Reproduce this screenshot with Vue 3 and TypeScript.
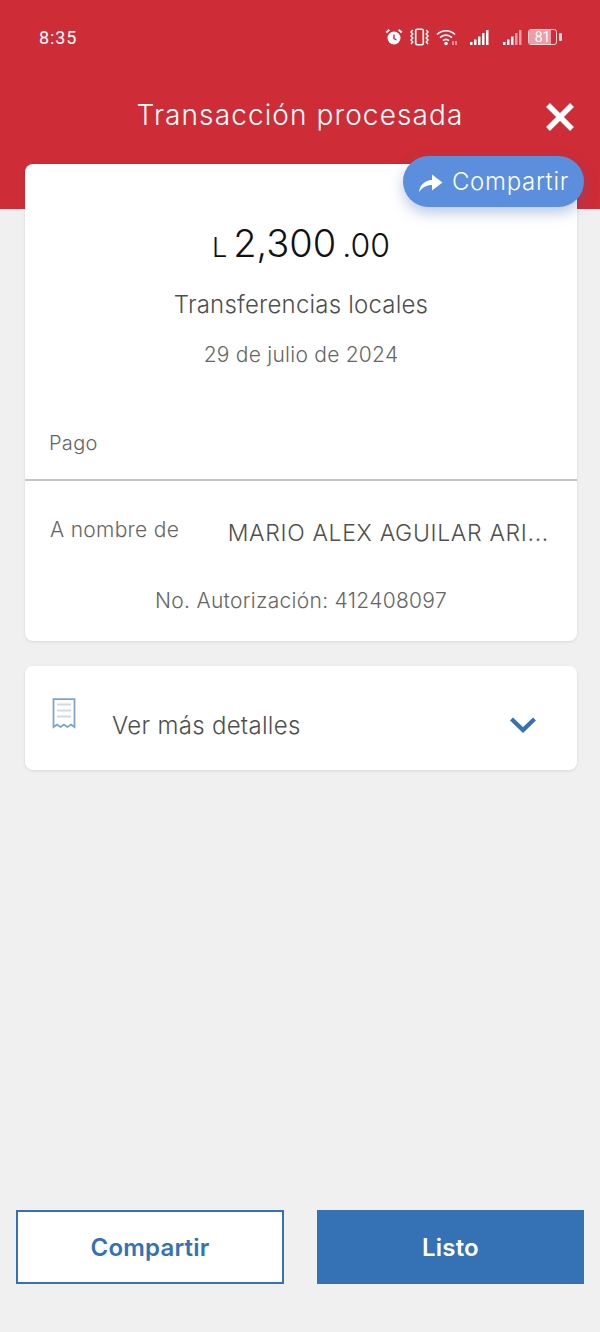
<template>
  <div class="screen">
    <header class="top">
      <div class="status">
        <span class="time">8:35</span>
        <div class="status-icons">
          <!-- alarm -->
          <svg width="18" height="18" viewBox="0 0 18 18">
            <circle cx="9" cy="10" r="6.500" fill="#fff" />
            <path d="M9 6.500V10.500L11.500 12" fill="none" stroke="#ce2c36" stroke-width="1.400" />
            <path d="M1.200 4.600 4.400 1.800M16.800 4.600 13.600 1.800" stroke="#fff" stroke-width="2" />
          </svg>
          <!-- vibrate -->
          <svg width="21" height="18" viewBox="0 0 21 18">
            <rect x="6.700" y="1.200" width="7.600" height="15.600" rx="1.500" fill="none" stroke="#fff" stroke-width="1.600" />
            <path d="M3.800 2 2 4l1.800 2L2 8l1.800 2L2 12l1.800 2L2 16M17.200 2 19 4l-1.800 2L19 8l-1.800 2 1.800 2-1.800 2 1.800 2" fill="none" stroke="#fff" stroke-width="1.400" />
          </svg>
          <!-- wifi -->
          <svg width="22" height="18" viewBox="0 0 22 18">
            <path d="M1 6.500C6 1.500 14 1.500 19 6.500M4 9.700C7.500 6.300 12.500 6.300 16 9.700M7 12.700C8.800 11 11.200 11 13 12.700" fill="none" stroke="#fff" stroke-width="1.700" />
            <circle cx="10" cy="15.500" r="1.800" fill="#fff" />
            <path d="M17 13v4M20 13v4" stroke="#f3c5c8" stroke-width="1.300" />
          </svg>
          <!-- signal 1 -->
          <svg class="sim-one" width="20" height="17" viewBox="0 0 20 17">
            <path d="M1 13h2.500v3H1zM5 10.500h2.500V16H5zM9 7.500h2.500V16H9zM13 4h2.500v12H13zM17 1h2.500v15H17z" fill="#fff" />
          </svg>
          <!-- signal 2 -->
          <svg class="sim-two" width="20" height="17" viewBox="0 0 20 17">
            <path d="M1 13h2.500v3H1zM5 10.500h2.500V16H5zM9 7.500h2.500V16H9z" fill="#fff" />
            <path d="M13 4h2.500v12H13zM17 1h2.500v15H17z" fill="#ee9ea3" />
          </svg>
          <!-- battery -->
          <div class="battery">
            <div class="battery-body">
              <div class="battery-fill" :style="{ width: battery + '%' }"></div>
              <span class="battery-num">{{ battery }}</span>
            </div>
            <div class="battery-tip"></div>
          </div>
        </div>
      </div>
      <div class="title-row">
        <h1>Transacción procesada</h1>
        <svg class="close" width="32" height="32" viewBox="0 0 32 32">
          <path d="M4 4 28 28M28 4 4 28" stroke="#fff" stroke-width="5.400" />
        </svg>
      </div>
    </header>

    <main class="content">
      <section class="card summary">
        <button class="float-share" type="button">
          <svg width="26" height="22" viewBox="0 0 26 22">
            <path d="M1 21C2 13.500 7 9.500 14 9V3.500L24.500 11.500 14 19.500V14C8.500 14 4.500 16.500 1 21Z" fill="#fff" />
          </svg>
          Compartir
        </button>
        <div class="amount">
          <span class="cur">L</span>
          <span class="int">2,300</span>
          <span class="dec">.00</span>
        </div>
        <p class="kind">Transferencias locales</p>
        <p class="date">29 de julio de 2024</p>
        <p class="pago">Pago</p>
        <div class="name-row">
          <span class="name-label">A nombre de</span>
          <span class="name-value">MARIO ALEX AGUILAR ARI...</span>
        </div>
        <p class="auth">No. Autorización: 412408097</p>
      </section>

      <section class="card details">
        <svg class="receipt" width="24" height="32" viewBox="0 0 24 32">
          <path d="M1.500 1.200H22.500V29L19 26.700 15.500 29 12 26.700 8.500 29 5 26.700 1.500 29Z" fill="#fff" stroke="#7ba6cf" stroke-width="1.800" />
          <path d="M5 6.500H19M5 12.500H19M5 18.500H19" stroke="#d0dae2" stroke-width="1.800" />
        </svg>
        <span class="details-text">Ver más detalles</span>
        <svg class="chevron" width="28" height="18" viewBox="0 0 28 18">
          <path d="M2.500 3 14 14 25.500 3" fill="none" stroke="#3571b5" stroke-width="4.200" />
        </svg>
      </section>
    </main>

    <footer class="actions">
      <button class="btn outline" type="button">Compartir</button>
      <button class="btn solid" type="button">Listo</button>
    </footer>
  </div>
</template>

<script setup lang="ts">
const battery = 81;
</script>

<style>
html,
body {
  margin: 0;
  background: #f0f0f0;
}
</style>

<style scoped>
.screen {
  display: flex;
  flex-direction: column;
  width: 600px;
  height: 1332px;
  background: #f0f0f0;
  font-family: Inter, "Noto Sans", sans-serif;
  color: #4f4f4f;
  overflow: hidden;
}

.top {
  height: 209px;
  flex-shrink: 0;
  background: #ce2c36;
  color: #fff;
}

.status {
  display: flex;
  justify-content: space-between;
  align-items: center;
  height: 24px;
  padding: 25px 38px 0 39px;
}

.time {
  font-family: Roboto, sans-serif;
  font-size: 18px;
  font-weight: 400;
  letter-spacing: 0.9px;
}

.status-icons {
  display: flex;
  align-items: center;
  gap: 6px;
}

.sim-one {
  margin-left: 5px;
}

.sim-two {
  margin-left: 7px;
}

.battery {
  display: flex;
  align-items: center;
  gap: 2px;
}

.battery-body {
  position: relative;
  width: 27px;
  height: 14px;
  border: 1.5px solid #f6d5d7;
  border-radius: 3px;
  overflow: hidden;
}

.battery-fill {
  height: 100%;
  background: #eb9ea3;
}

.battery-num {
  position: absolute;
  inset: 0;
  text-align: center;
  font-family: Roboto, sans-serif;
  font-size: 14px;
  font-weight: 400;
  line-height: 14px;
}

.battery-tip {
  width: 3px;
  height: 8px;
  border-radius: 1px;
  background: #f6d5d7;
}

.title-row {
  position: relative;
  margin-top: 49px;
}

h1 {
  margin: 0;
  text-align: center;
  font-size: 28px;
  font-weight: 300;
  line-height: 34px;
  letter-spacing: 1.1px;
}

.close {
  position: absolute;
  top: 3px;
  right: 24px;
}

.content {
  display: flex;
  flex-direction: column;
  gap: 25px;
  margin-top: -45px;
  padding: 0 23px 0 25px;
}

.card {
  background: #fff;
  border-radius: 8px;
  box-shadow: 0 1px 3px rgba(0, 0, 0, 0.1);
}

.summary {
  position: relative;
  height: 477px;
  box-sizing: border-box;
  padding-top: 57px;
  text-align: center;
}

.float-share {
  position: absolute;
  top: -8px;
  right: -7px;
  display: flex;
  align-items: center;
  justify-content: center;
  gap: 8px;
  width: 181px;
  height: 51px;
  padding: 0;
  border: none;
  border-radius: 26px;
  background: #5b8edd;
  color: #fff;
  font-family: inherit;
  font-size: 24px;
  font-weight: 300;
  letter-spacing: 0.7px;
  box-shadow: 0 6px 14px rgba(60, 100, 170, 0.35);
}

.amount {
  display: flex;
  justify-content: center;
  align-items: baseline;
  gap: 6px;
  height: 44px;
  color: #111;
  font-weight: 300;
  line-height: 44px;
}

.cur {
  font-size: 27px;
  font-weight: 300;
  margin-right: 0;
}

.int {
  font-size: 38px;
}

.dec {
  font-size: 32px;
}

.kind {
  margin: 25px 0 0;
  font-size: 24px;
  font-weight: 300;
  line-height: 30px;
  letter-spacing: 0.2px;
}

.date {
  margin: 22px 0 0;
  font-size: 21px;
  font-weight: 300;
  line-height: 26px;
  letter-spacing: 0.25px;
  color: #666;
}

.pago {
  margin: 62px 0 0;
  padding: 0 0 23px 24px;
  border-bottom: 2px solid #c4c4c4;
  text-align: left;
  font-size: 20px;
  font-weight: 300;
  line-height: 26px;
  letter-spacing: 0.3px;
  color: #666;
}

.name-row {
  display: flex;
  align-items: center;
  padding: 37px 28px 0 25px;
}

.name-label {
  width: 178px;
  text-align: left;
  font-size: 21px;
  font-weight: 300;
  line-height: 26px;
  letter-spacing: 0.3px;
  color: #666;
  position: relative;
  top: -3px;
}

.name-value {
  white-space: nowrap;
  font-size: 23px;
  font-weight: 300;
  letter-spacing: 0.67px;
  line-height: 30px;
}

.auth {
  margin: 40px 0 0;
  font-size: 21px;
  font-weight: 300;
  line-height: 26px;
  letter-spacing: 0.3px;
  color: #666;
}

.details {
  display: flex;
  align-items: center;
  height: 104px;
  box-sizing: border-box;
  padding: 14px 40px 0 27px;
}

.receipt {
  align-self: flex-start;
  margin-top: 18px;
}

.details-text {
  margin-left: 36px;
  flex: 1;
  font-size: 24px;
  font-weight: 300;
  letter-spacing: 0.3px;
}

.actions {
  display: flex;
  justify-content: space-between;
  margin-top: auto;
  margin-bottom: 48px;
  padding: 0 16px;
}

.btn {
  width: 268px;
  height: 74px;
  box-sizing: border-box;
  border: 2px solid #3571b5;
  font-family: inherit;
  font-size: 24px;
  font-weight: 600;
  letter-spacing: 0.2px;
}

.outline {
  background: #fff;
  color: #3571b5;
}

.solid {
  width: 267px;
  background: #3571b5;
  color: #fff;
}
</style>
